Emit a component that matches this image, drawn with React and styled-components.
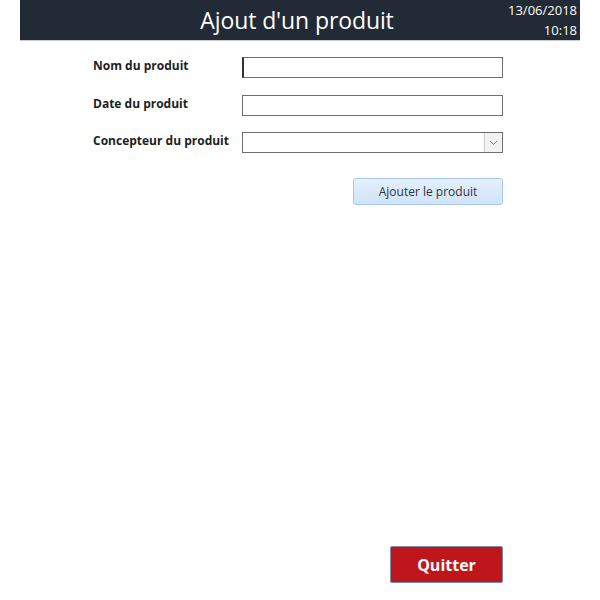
import React from "react";
import styled, { createGlobalStyle } from "styled-components";

const Global = createGlobalStyle`
  html, body { margin: 0; padding: 0; background: #fff; }
  body { font-family: "Open Sans", "Noto Sans", sans-serif; }
`;

const Page = styled.div`
  width: 600px;
  height: 600px;
  display: flex;
  flex-direction: column;
`;

const Header = styled.header`
  margin: 0 20px;
  height: 40px;
  background: #222a35;
  border-bottom: 1px solid #c9ccd0;
  display: grid;
  grid-template-columns: 1fr auto 1fr;
  align-items: center;
  color: #fff;
`;

const Title = styled.h1`
  grid-column: 2;
  margin: 0;
  font-size: 23px;
  font-weight: 400;
  letter-spacing: -0.1px;
  transform: translateX(-3px);
`;

const Stamp = styled.div`
  grid-column: 3;
  justify-self: end;
  padding-right: 3px;
  display: flex;
  flex-direction: column;
  align-items: flex-end;
  font-size: 13px;
  line-height: 20px;
`;

const Form = styled.div`
  display: grid;
  grid-template-columns: 149px 261px;
  padding: 16px 0 0 93px;
  align-items: center;
`;

const Label = styled.label`
  font-size: 12px;
  font-weight: 700;
  color: #1e1e1e;
  align-self: start;
  margin-top: ${p => p.$gap || 0}px;
`;

const Field = styled.div`
  height: 21px;
  box-sizing: border-box;
  margin-top: ${p => p.$gap || 0}px;
  border: 1px solid #6e6e6e;
  background: #fff;
  display: flex;
  justify-content: flex-end;
  ${p => p.$focus && "border-left: 2px solid #333;"}
`;

const Arrow = styled.div`
  width: 17px;
  border-left: 1px solid #c8c8c8;
  background: #f2f2f2;
  display: flex;
  align-items: center;
  justify-content: center;
`;

const Actions = styled.div`
  display: flex;
  justify-content: flex-end;
  width: 503px;
  padding-top: 25px;
`;

const AddButton = styled.button`
  width: 150px;
  height: 27px;
  border: 1px solid #a7c8ec;
  border-radius: 3px;
  background: linear-gradient(#e4f0fd, #cfe3fa);
  font-family: inherit;
  font-size: 12px;
  color: #333;
  padding: 0;
`;

const Spacer = styled.div`
  flex: 1;
`;

const Footer = styled.div`
  display: flex;
  justify-content: flex-end;
  width: 503px;
  padding-bottom: 17px;
`;

const QuitButton = styled.button`
  width: 113px;
  height: 37px;
  border: 1px solid #7d8aa8;
  border-radius: 2px;
  background: #bf161b;
  color: #fff;
  font-family: inherit;
  font-size: 16px;
  font-weight: 700;
  padding: 0;
`;

export default function App() {
  return (
    <Page>
      <Global />
      <Header>
        <Title>Ajout d'un produit</Title>
        <Stamp>
          <span>13/06/2018</span>
          <span>10:18</span>
        </Stamp>
      </Header>
      <Form>
        <Label>Nom du produit</Label>
        <Field $focus />
        <Label $gap={17}>Date du produit</Label>
        <Field $gap={17} />
        <Label $gap={16}>Concepteur du produit</Label>
        <Field $gap={16}>
          <Arrow>
            <svg width="9" height="6" viewBox="0 0 9 6">
              <path d="M1 1 L4.5 4.5 L8 1" fill="none" stroke="#777" strokeWidth="1" />
            </svg>
          </Arrow>
        </Field>
      </Form>
      <Actions>
        <AddButton>Ajouter le produit</AddButton>
      </Actions>
      <Spacer />
      <Footer>
        <QuitButton>Quitter</QuitButton>
      </Footer>
    </Page>
  );
}
